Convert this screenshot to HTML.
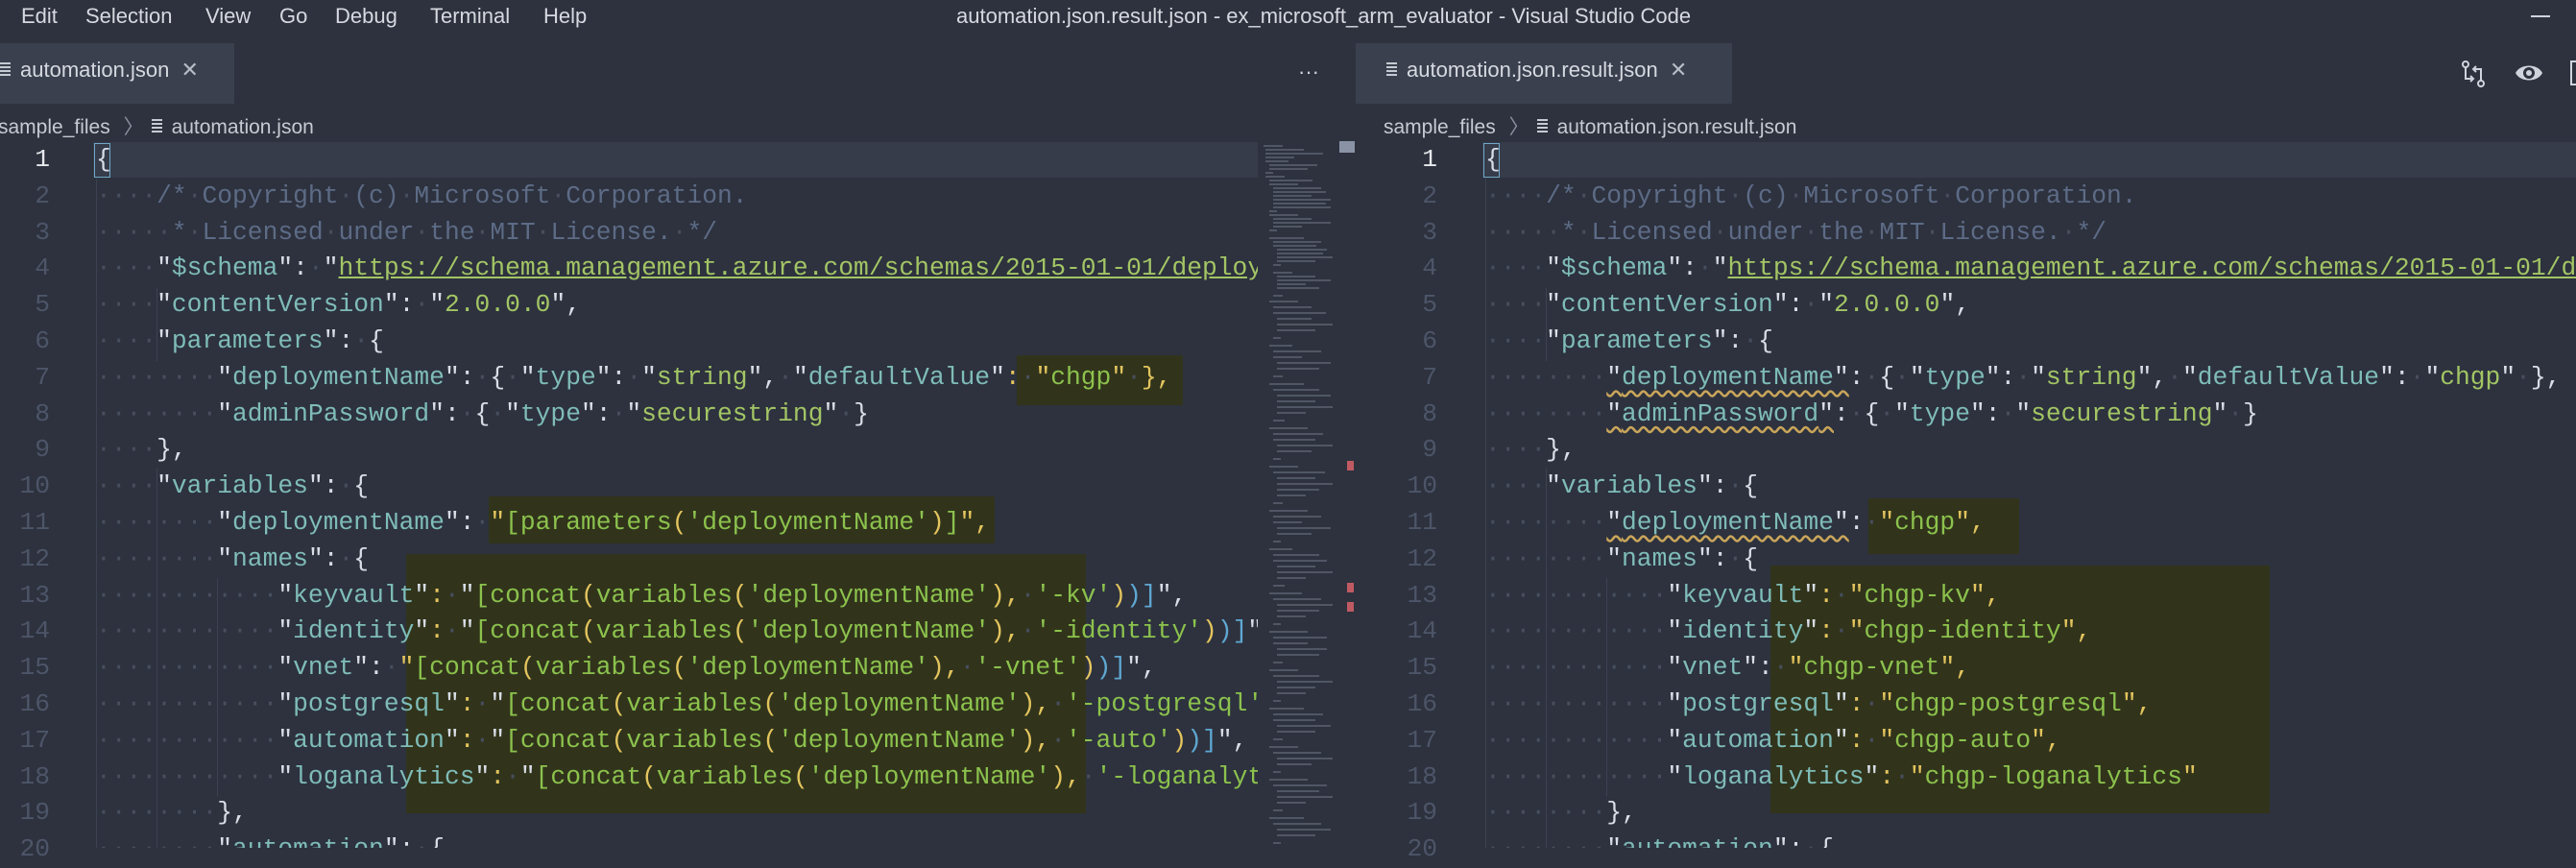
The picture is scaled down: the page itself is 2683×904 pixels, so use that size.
<!DOCTYPE html>
<html><head><meta charset="utf-8"><style>
*{margin:0;padding:0;box-sizing:border-box}
body{width:2683px;height:883px;background:#2d323e;overflow:hidden;position:relative;font-family:"Liberation Sans",sans-serif;color:#cfd3dc}
.menu{position:absolute;top:4px;font-size:22px;color:#d6d9e0}
.title{position:absolute;top:4px;left:996px;font-size:22px;color:#d6d9e0;white-space:nowrap}
.tab{position:absolute;top:45px;height:63px;background:#3a404e}
.tabt{position:absolute;top:60px;font-size:22px;color:#d6d9e0;white-space:nowrap}
.crumb{position:absolute;top:116px;font-size:21px;color:#c6cad2;white-space:nowrap}
.fi{display:inline-block;width:11px;height:16px;vertical-align:-1px;background:repeating-linear-gradient(#c6cad2 0 2px,transparent 2px 4px);margin-right:10px}
.code{position:absolute;top:148px;font-family:"Liberation Mono",monospace;font-size:26.3px;line-height:37.8px;white-space:pre;color:#d8dde6;overflow:hidden}
.ln{position:absolute;top:148px;font-family:"Liberation Mono",monospace;font-size:26.3px;line-height:37.8px;text-align:right;color:#4d5568;width:60px;white-space:pre}
.ln b{color:#e6e8ec;font-weight:normal}
.w{color:#474e5e}
.k{color:#7fbcb8}
.s{color:#a3c565}
.c{color:#5d6b86}
.u{color:#a3c565;text-decoration:underline;text-decoration-color:#a3c565}
.y{color:#e3c45e}
.g{color:#8cc24d}
.bl{color:#5fa8d3}
.sq{text-decoration:underline wavy #c9a55a;text-underline-offset:6px}
.hl{position:absolute;background:#31341b}
.cur{position:absolute;background:#363c4a;height:37px;top:148px}
.gd{position:absolute;width:1px;background:#3c4252}
</style></head><body>
<div class="menu" style="left:22px">Edit</div>
<div class="menu" style="left:89px">Selection</div>
<div class="menu" style="left:214px">View</div>
<div class="menu" style="left:291px">Go</div>
<div class="menu" style="left:349px">Debug</div>
<div class="menu" style="left:448px">Terminal</div>
<div class="menu" style="left:566px">Help</div>
<div class="title">automation.json.result.json - ex_microsoft_arm_evaluator - Visual Studio Code</div>
<div style="position:absolute;left:2636px;top:16px;width:20px;height:2px;background:#cfd3dc"></div>

<div class="tab" style="left:0;width:244px"></div>
<div class="tabt" style="left:0"><span class="fi"></span>automation.json <span style="margin-left:6px;color:#b8bcc6">✕</span></div>
<div style="position:absolute;left:1352px;top:62px;font-size:22px;color:#cfd3dc">···</div>
<div class="tab" style="left:1412px;width:392px"></div>
<div class="tabt" style="left:1444px"><span class="fi"></span>automation.json.result.json <span style="margin-left:6px;color:#b8bcc6">✕</span></div>
<svg style="position:absolute;left:2563px;top:62px" width="26" height="30" viewBox="0 0 26 30" fill="none" stroke="#cfd3dc" stroke-width="2"><circle cx="5" cy="5" r="3"/><circle cx="21" cy="25" r="3"/><path d="M5 8v12h8M10 17l3 3-3 3M21 22V10h-8M16 7l-3 3 3 3"/></svg>
<svg style="position:absolute;left:2619px;top:62px" width="30" height="28" viewBox="0 0 30 28"><path d="M1 14C6 4 24 4 29 14 24 24 6 24 1 14Z" fill="#cfd3dc"/><circle cx="15" cy="14" r="6" fill="#2d323e"/><circle cx="15" cy="14" r="3" fill="#cfd3dc"/></svg>
<div style="position:absolute;left:2677px;top:63px;width:10px;height:26px;border:2px solid #cfd3dc"></div>

<div class="crumb" style="left:-2px">sample_files <span style="color:#8a90a0;margin:0 8px">〉</span><span class="fi"></span>automation.json</div>
<div class="crumb" style="left:1441px">sample_files <span style="color:#8a90a0;margin:0 8px">〉</span><span class="fi"></span>automation.json.result.json</div>

<!-- left pane -->
<div class="cur" style="left:97px;width:1213px"></div>
<div class="gd" style="left:100px;top:186px;height:697px"></div>
<div class="gd" style="left:163px;top:300px;height:76px"></div>
<div class="gd" style="left:163px;top:488px;height:395px"></div>
<div class="gd" style="left:226px;top:602px;height:227px"></div>
<div class="hl" style="left:1059px;top:370px;width:173px;height:52px"></div>
<div class="hl" style="left:509px;top:517px;width:527px;height:49px"></div>
<div class="hl" style="left:423px;top:577px;width:708px;height:270px"></div>
<div style="position:absolute;left:98px;top:149px;width:17px;height:36px;border:1px solid #6fa8c8"></div>
<div class="ln" style="left:-8px"><b>1</b>
2
3
4
5
6
7
8
9
10
11
12
13
14
15
16
17
18
19
20</div>
<div class="code" style="left:100px;width:1210px;height:735px">{
<span class="w">····</span><span class="c">/*<span class="w">·</span>Copyright<span class="w">·</span>(c)<span class="w">·</span>Microsoft<span class="w">·</span>Corporation.</span>
<span class="w">····</span><span class="c"><span class="w">·</span>*<span class="w">·</span>Licensed<span class="w">·</span>under<span class="w">·</span>the<span class="w">·</span>MIT<span class="w">·</span>License.<span class="w">·</span>*/</span>
<span class="w">····</span>"<span class="k">$schema</span>":<span class="w">·</span>"<span class="u">https://schema.management.azure.com/schemas/2015-01-01/deploymentTemplate.json#</span>",
<span class="w">····</span>"<span class="k">contentVersion</span>":<span class="w">·</span>"<span class="s">2.0.0.0</span>",
<span class="w">····</span>"<span class="k">parameters</span>":<span class="w">·</span>{
<span class="w">········</span>"<span class="k">deploymentName</span>":<span class="w">·</span>{<span class="w">·</span>"<span class="k">type</span>":<span class="w">·</span>"<span class="s">string</span>",<span class="w">·</span>"<span class="k">defaultValue</span>"<span class="y">:</span><span class="w">·</span><span class="y">"</span><span class="g">chgp</span><span class="y">"</span><span class="w">·</span><span class="y">},</span>
<span class="w">········</span>"<span class="k">adminPassword</span>":<span class="w">·</span>{<span class="w">·</span>"<span class="k">type</span>":<span class="w">·</span>"<span class="s">securestring</span>"<span class="w">·</span>}
<span class="w">····</span>},
<span class="w">····</span>"<span class="k">variables</span>":<span class="w">·</span>{
<span class="w">········</span>"<span class="k">deploymentName</span>":<span class="w">·</span><span class="y">"</span><span class="g">[parameters</span><span class="y">(</span><span class="g">'deploymentName'</span><span class="y">)</span><span class="g">]</span><span class="y">",</span>
<span class="w">········</span>"<span class="k">names</span>":<span class="w">·</span>{
<span class="w">············</span>"<span class="k">keyvault</span>"<span class="y">:</span><span class="w">·</span>"<span class="g">[concat</span><span class="y">(</span><span class="g">variables</span><span class="y">(</span><span class="g">'deploymentName'</span><span class="y">),</span><span class="w">·</span><span class="g">'-kv'</span><span class="y">)</span><span class="bl">)]</span>",
<span class="w">············</span>"<span class="k">identity</span>"<span class="y">:</span><span class="w">·</span>"<span class="g">[concat</span><span class="y">(</span><span class="g">variables</span><span class="y">(</span><span class="g">'deploymentName'</span><span class="y">),</span><span class="w">·</span><span class="g">'-identity'</span><span class="y">)</span><span class="bl">)]</span>",
<span class="w">············</span>"<span class="k">vnet</span>":<span class="w">·</span><span class="y">"</span><span class="g">[concat</span><span class="y">(</span><span class="g">variables</span><span class="y">(</span><span class="g">'deploymentName'</span><span class="y">),</span><span class="w">·</span><span class="g">'-vnet'</span><span class="y">)</span><span class="bl">)]</span>",
<span class="w">············</span>"<span class="k">postgresql</span>"<span class="y">:</span><span class="w">·</span>"<span class="g">[concat</span><span class="y">(</span><span class="g">variables</span><span class="y">(</span><span class="g">'deploymentName'</span><span class="y">),</span><span class="w">·</span><span class="g">'-postgresql'</span><span class="y">)</span><span class="bl">)]</span>",
<span class="w">············</span>"<span class="k">automation</span>"<span class="y">:</span><span class="w">·</span>"<span class="g">[concat</span><span class="y">(</span><span class="g">variables</span><span class="y">(</span><span class="g">'deploymentName'</span><span class="y">),</span><span class="w">·</span><span class="g">'-auto'</span><span class="y">)</span><span class="bl">)]</span>",
<span class="w">············</span>"<span class="k">loganalytics</span>"<span class="y">:</span><span class="w">·</span>"<span class="g">[concat</span><span class="y">(</span><span class="g">variables</span><span class="y">(</span><span class="g">'deploymentName'</span><span class="y">),</span><span class="w">·</span><span class="g">'-loganalytics'</span><span class="y">)</span><span class="bl">)]</span>"
<span class="w">········</span>},
<span class="w">········</span>"<span class="k">automation</span>":<span class="w">·</span>{</div>
<!-- minimap -->
<svg style="position:absolute;left:1312px;top:148px" width="76" height="735">
<g stroke="#7c8494" stroke-width="1.5" opacity="0.6">
<path d="M4 4h20M6 8h40M6 12h60M6 16h30M6 20h24M10 24h50M10 28h40M6 32h8M6 36h20M10 40h45M10 44h30M14 48h50M14 52h55M14 56h40M14 60h60M14 64h55M14 68h60M10 72h8M10 76h30M14 80h40M14 84h60M14 88h30M10 92h8M10 100h36M14 104h50M14 108h45M18 112h52M18 116h48M18 120h60M18 124h40M14 128h8M14 136h20M18 140h40M18 144h56M18 148h30M18 152h44M14 160h10M10 166h30M14 172h40M14 178h55M18 184h36M18 190h58M18 196h40M14 204h8M10 212h24M14 218h50M14 224h30M18 230h56M18 236h44M14 244h10M10 252h36M14 258h48M18 264h56M18 270h40M18 276h58M18 282h30M14 290h12M10 298h40M14 304h52M14 310h44M18 316h60M18 322h36M14 330h8M10 338h30M14 344h54M18 350h40M18 356h58M18 362h44M18 368h30M14 376h10M10 384h40M14 390h50M14 396h30M18 402h56M18 408h36M14 416h8M10 424h24M14 430h48M14 436h56M18 442h40M18 448h58M18 454h30M14 462h12M10 470h34M14 476h50M18 482h58M18 488h44M18 494h30M14 502h8M10 510h40M14 516h56M14 522h36M18 528h52M18 534h44M14 542h10M10 550h30M14 556h48M18 562h58M18 568h40M18 574h30M14 582h8M10 590h36M14 596h52M14 602h44M18 608h56M18 614h40M14 622h10M10 630h30M14 636h50M18 642h58M18 648h36M14 656h8M10 664h40M14 670h56M18 676h44M18 682h58M18 688h30M14 696h10M10 704h36M14 710h50M18 716h56M18 722h40M14 730h8"/>
</g></svg>
<div style="position:absolute;left:1395px;top:147px;width:16px;height:12px;background:#8a93a6"></div>
<div style="position:absolute;left:1403px;top:480px;width:7px;height:10px;background:#c05a62"></div>
<div style="position:absolute;left:1403px;top:607px;width:7px;height:10px;background:#c05a62"></div>
<div style="position:absolute;left:1403px;top:627px;width:7px;height:10px;background:#c05a62"></div>

<!-- right pane -->
<div class="cur" style="left:1544px;width:1139px"></div>
<div class="gd" style="left:1547px;top:186px;height:697px"></div>
<div class="gd" style="left:1610px;top:300px;height:76px"></div>
<div class="gd" style="left:1610px;top:488px;height:395px"></div>
<div class="gd" style="left:1673px;top:602px;height:227px"></div>
<div class="hl" style="left:1946px;top:519px;width:157px;height:58px"></div>
<div class="hl" style="left:1844px;top:589px;width:520px;height:258px"></div>
<div style="position:absolute;left:1545px;top:149px;width:17px;height:36px;border:1px solid #6fa8c8"></div>
<div class="ln" style="left:1437px"><b>1</b>
2
3
4
5
6
7
8
9
10
11
12
13
14
15
16
17
18
19
20</div>
<div class="code" style="left:1547px;width:1136px;height:735px">{
<span class="w">····</span><span class="c">/*<span class="w">·</span>Copyright<span class="w">·</span>(c)<span class="w">·</span>Microsoft<span class="w">·</span>Corporation.</span>
<span class="w">····</span><span class="c"><span class="w">·</span>*<span class="w">·</span>Licensed<span class="w">·</span>under<span class="w">·</span>the<span class="w">·</span>MIT<span class="w">·</span>License.<span class="w">·</span>*/</span>
<span class="w">····</span>"<span class="k">$schema</span>":<span class="w">·</span>"<span class="u">https://schema.management.azure.com/schemas/2015-01-01/deploymentTemplate.json#</span>",
<span class="w">····</span>"<span class="k">contentVersion</span>":<span class="w">·</span>"<span class="s">2.0.0.0</span>",
<span class="w">····</span>"<span class="k">parameters</span>":<span class="w">·</span>{
<span class="w">········</span><span class="sq">"<span class="k">deploymentName</span>"</span>:<span class="w">·</span>{<span class="w">·</span>"<span class="k">type</span>":<span class="w">·</span>"<span class="s">string</span>",<span class="w">·</span>"<span class="k">defaultValue</span>":<span class="w">·</span>"<span class="s">chgp</span>"<span class="w">·</span>},
<span class="w">········</span><span class="sq">"<span class="k">adminPassword</span>"</span>:<span class="w">·</span>{<span class="w">·</span>"<span class="k">type</span>":<span class="w">·</span>"<span class="s">securestring</span>"<span class="w">·</span>}
<span class="w">····</span>},
<span class="w">····</span>"<span class="k">variables</span>":<span class="w">·</span>{
<span class="w">········</span><span class="sq">"<span class="k">deploymentName</span>"</span>:<span class="w">·</span><span class="y">"</span><span class="g">chgp</span><span class="y">",</span>
<span class="w">········</span>"<span class="k">names</span>":<span class="w">·</span>{
<span class="w">············</span>"<span class="k">keyvault</span>"<span class="y">:</span><span class="w">·</span><span class="y">"</span><span class="g">chgp-kv</span><span class="y">",</span>
<span class="w">············</span>"<span class="k">identity</span>"<span class="y">:</span><span class="w">·</span><span class="y">"</span><span class="g">chgp-identity</span><span class="y">",</span>
<span class="w">············</span>"<span class="k">vnet</span>":<span class="w">·</span><span class="y">"</span><span class="g">chgp-vnet</span><span class="y">",</span>
<span class="w">············</span>"<span class="k">postgresql</span>"<span class="y">:</span><span class="w">·</span><span class="y">"</span><span class="g">chgp-postgresql</span><span class="y">",</span>
<span class="w">············</span>"<span class="k">automation</span>"<span class="y">:</span><span class="w">·</span><span class="y">"</span><span class="g">chgp-auto</span><span class="y">",</span>
<span class="w">············</span>"<span class="k">loganalytics</span>"<span class="y">:</span><span class="w">·</span><span class="y">"</span><span class="g">chgp-loganalytics</span><span class="y">"</span>
<span class="w">········</span>},
<span class="w">········</span>"<span class="k">automation</span>":<span class="w">·</span>{</div>
</body></html>
